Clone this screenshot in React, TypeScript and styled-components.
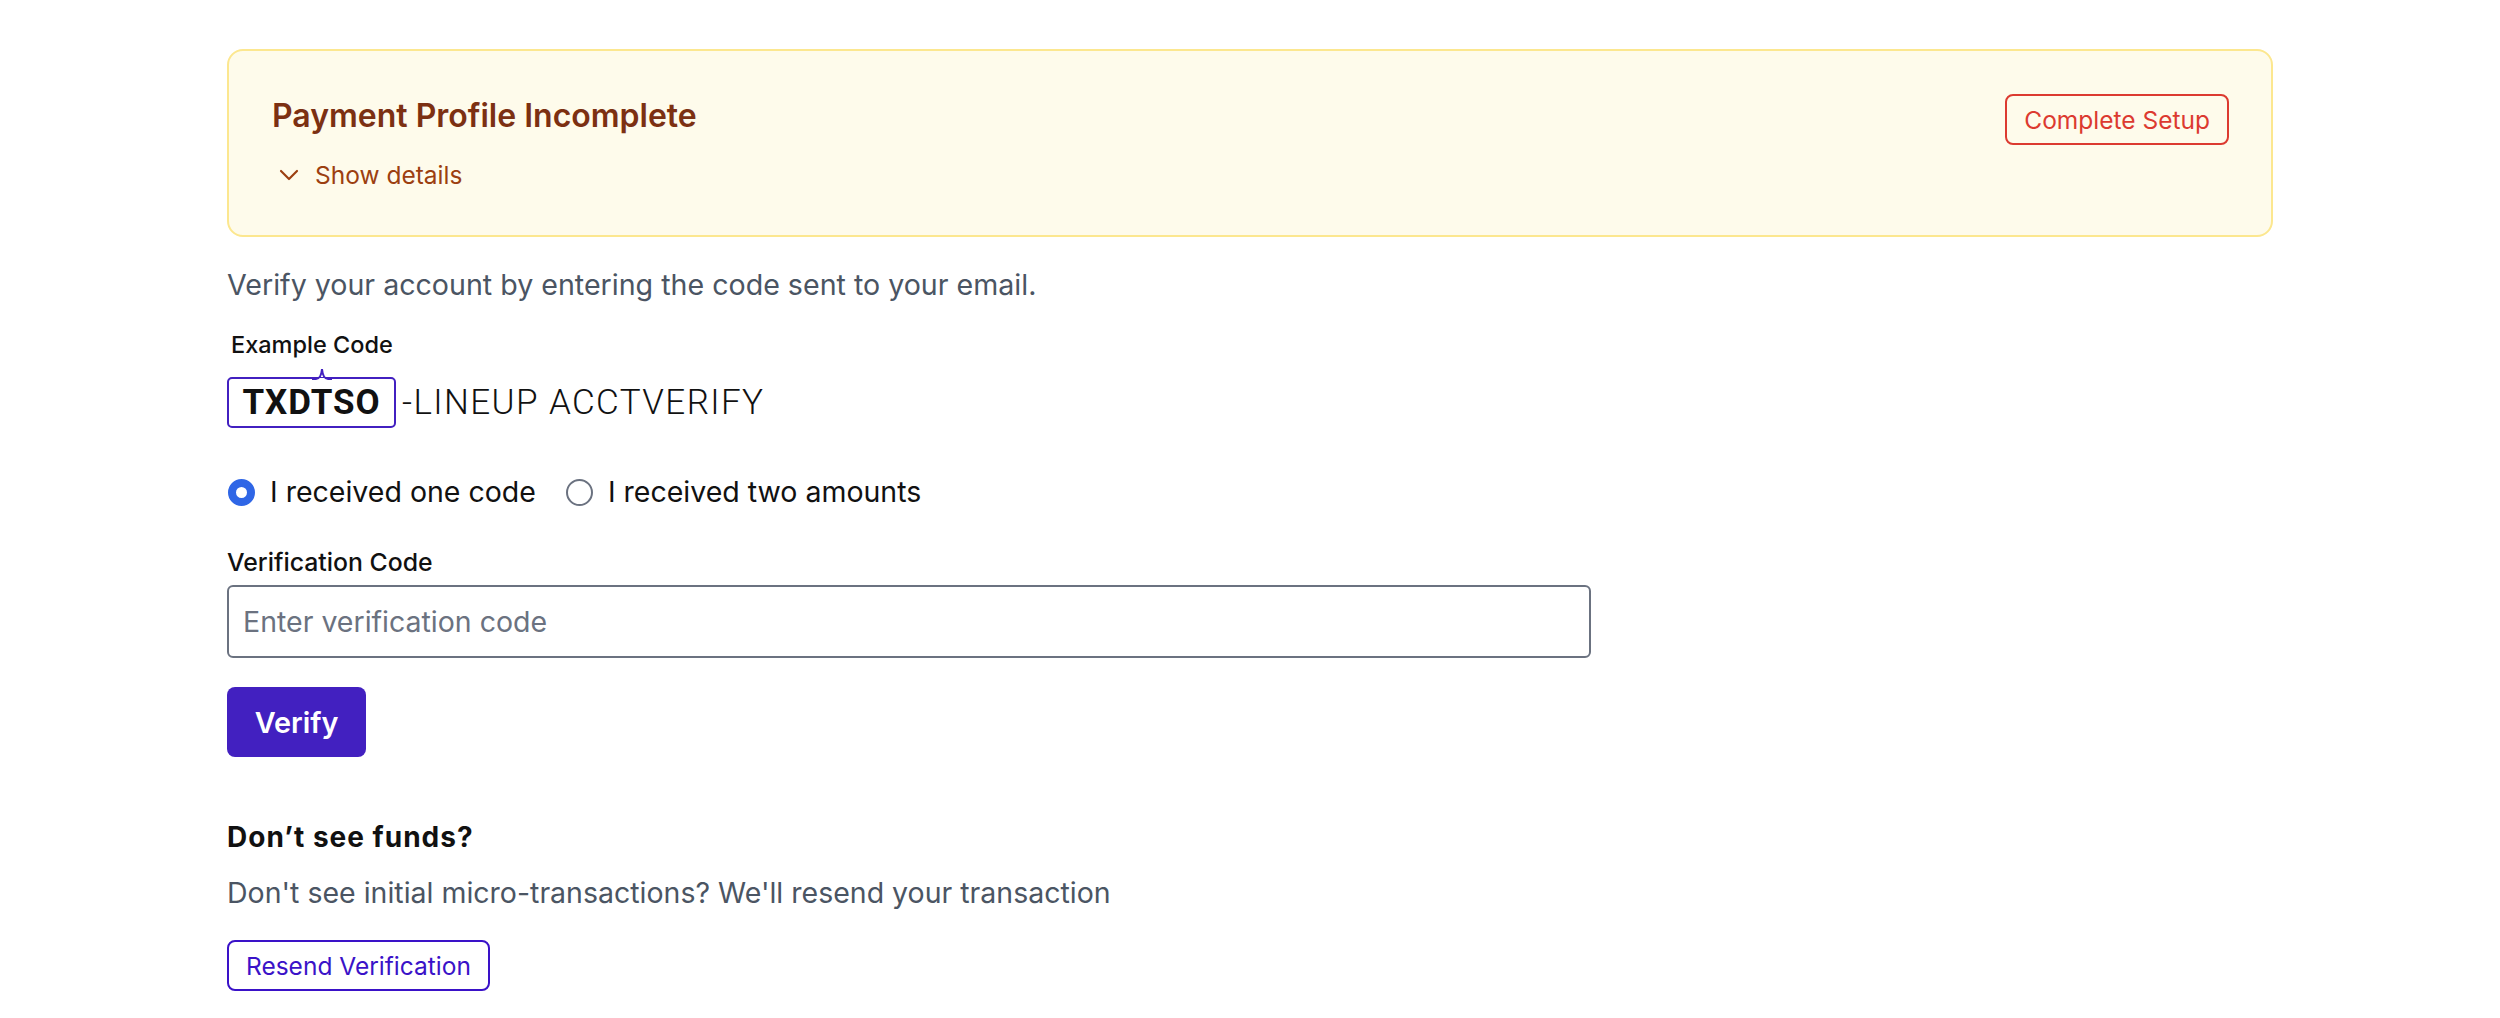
import * as React from 'react'
import styled, { createGlobalStyle } from 'styled-components'
import { ChevronDown } from 'lucide-react'

const colors = {
  indigo: '#4220c0',
  indigoText: '#3a12c8',
  slate: '#4b5563',
  brown: '#7c3012',
  rust: '#9c3f10',
  red: '#dc3a30',
  bannerBg: '#fefbeb',
  bannerBorder: '#fce78f',
}

const GlobalStyle = createGlobalStyle`
  body {
    margin: 0;
    background: #ffffff;
    font-family: Inter, 'Noto Sans', sans-serif;
    color: #111827;
  }
`

const Page = styled('main')`
  width: 2046px;
  margin: 0 auto;
  padding-top: 49px;
  display: flex;
  flex-direction: column;
  align-items: flex-start;
`

const Banner = styled('section')`
  box-sizing: border-box;
  width: 100%;
  padding: 43px 42px 42px 43px;
  background: ${colors.bannerBg};
  border: 2px solid ${colors.bannerBorder};
  border-radius: 16px;
  display: flex;
  justify-content: space-between;
  align-items: flex-start;
`

const BannerText = styled('div')`
  display: flex;
  flex-direction: column;
  gap: 19px;
`

const BannerTitle = styled('h2')`
  margin: 0;
  font-size: 32px;
  line-height: 44px;
  font-weight: 600;
  color: ${colors.brown};
`

const DetailsToggle = styled('button')`
  display: flex;
  align-items: center;
  gap: 10px;
  padding: 0 0 0 1px;
  border: 0;
  background: none;
  font-family: inherit;
  font-size: 24.5px;
  line-height: 36px;
  color: ${colors.rust};
  cursor: pointer;
`

const OutlineButton = styled('button')<{ $tone: string }>`
  box-sizing: border-box;
  height: 51px;
  padding: 0 17px;
  border: 2px solid ${(p) => p.$tone};
  border-radius: 8px;
  background: transparent;
  color: ${(p) => p.$tone};
  font-family: inherit;
  font-size: 24.5px;
  font-weight: 400;
  cursor: pointer;
`

const Intro = styled('p')`
  margin: 27px 0 0;
  font-size: 28.6px;
  line-height: 42px;
  color: ${colors.slate};
`

const ExampleLabel = styled('div')`
  margin: 24px 0 0 4px;
  font-size: 23.5px;
  line-height: 30px;
  font-weight: 500;
  color: #111;
`

const CodeRow = styled('div')`
  margin-top: 17px;
  display: flex;
  align-items: center;
  gap: 6px;
`

const CodeBox = styled('span')`
  position: relative;
  box-sizing: border-box;
  height: 51px;
  width: 169px;
  display: flex;
  align-items: center;
  justify-content: center;
  border: 2px solid ${colors.indigo};
  border-radius: 5px;
  font-family: Roboto, 'Liberation Sans', sans-serif;
  font-weight: 700;
  font-size: 35px;
  letter-spacing: 0.9px;
  color: #111;
`

const Notch = styled('svg')`
  position: absolute;
  top: -12px;
  left: 83px;
`

const CodeRest = styled('span')`
  font-family: Roboto, 'Liberation Sans', sans-serif;
  font-weight: 300;
  font-size: 35px;
  letter-spacing: 1.4px;
  color: #111;
`

const RadioGroup = styled('div')`
  margin-top: 43px;
  display: flex;
  gap: 30px;
`

const RadioOption = styled('label')`
  display: flex;
  align-items: center;
  gap: 15px;
  font-size: 28.5px;
  line-height: 42px;
  color: #111;
`

const RadioDot = styled('span')<{ $checked?: boolean }>`
  box-sizing: border-box;
  width: 27px;
  height: 27px;
  border-radius: 50%;
  margin-left: ${(p) => (p.$checked ? '1px' : '0')};
  border: ${(p) => (p.$checked ? '8.5px solid #2f66e6' : '2px solid #6b7280')};
  background: #fff;
`

const FieldLabel = styled('label')`
  margin-top: 32px;
  font-size: 24.8px;
  line-height: 34px;
  font-weight: 500;
  color: #111;
`

const TextInput = styled('input')`
  box-sizing: border-box;
  margin-top: 6px;
  width: 1364px;
  height: 73px;
  padding: 0 14px;
  border: 2px solid #6b7280;
  border-radius: 6px;
  font-family: inherit;
  font-size: 28.5px;
  color: #111;
  outline: none;

  &::placeholder {
    color: #6b7280;
  }
`

const PrimaryButton = styled('button')`
  margin-top: 29px;
  height: 70px;
  width: 139px;
  border: 0;
  border-radius: 8px;
  background: ${colors.indigo};
  color: #fff;
  font-family: inherit;
  font-size: 28.8px;
  font-weight: 600;
  cursor: pointer;
`

const SubHeading = styled('h3')`
  margin: 62px 0 0;
  font-size: 28px;
  line-height: 36px;
  font-weight: 700;
  letter-spacing: 1px;
  color: #111;
`

const Help = styled('p')`
  margin: 17px 0 26px;
  font-size: 28.5px;
  line-height: 42px;
  color: ${colors.slate};
`

export default function App() {
  return (
    <>
      <GlobalStyle />
      <Page>
        <Banner>
          <BannerText>
            <BannerTitle>Payment Profile Incomplete</BannerTitle>
            <DetailsToggle>
              <ChevronDown size={32} strokeWidth={1.6} />
              Show details
            </DetailsToggle>
          </BannerText>
          <OutlineButton $tone={colors.red}>Complete Setup</OutlineButton>
        </Banner>

        <Intro>Verify your account by entering the code sent to your email.</Intro>

        <ExampleLabel>Example Code</ExampleLabel>
        <CodeRow>
          <CodeBox>
            <Notch width="20" height="14" viewBox="0 0 20 14">
              <rect x="0" y="11" width="20" height="3" fill="#fff" />
              <path d="M0 12 H4 Q9 12 10 2 Q11 12 16 12 H20" fill="none" stroke={colors.indigo} strokeWidth="2" />
            </Notch>
            TXDTSO
          </CodeBox>
          <CodeRest>-LINEUP ACCTVERIFY</CodeRest>
        </CodeRow>

        <RadioGroup>
          <RadioOption>
            <RadioDot $checked />I received one code
          </RadioOption>
          <RadioOption>
            <RadioDot />I received two amounts
          </RadioOption>
        </RadioGroup>

        <FieldLabel>Verification Code</FieldLabel>
        <TextInput placeholder="Enter verification code" />
        <PrimaryButton>Verify</PrimaryButton>

        <SubHeading>Don’t see funds?</SubHeading>
        <Help>Don't see initial micro-transactions? We'll resend your transaction</Help>
        <OutlineButton $tone={colors.indigoText}>Resend Verification</OutlineButton>
      </Page>
    </>
  )
}
